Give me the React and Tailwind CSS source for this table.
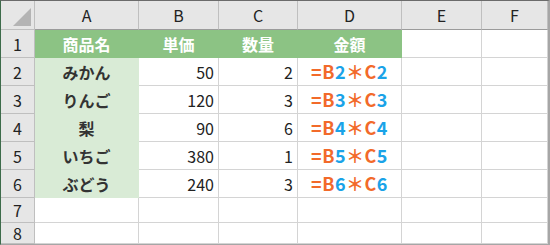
const cols = ["A", "B", "C", "D", "E", "F"];
const colW = ["w-[104px]", "w-[80px]", "w-[79px]", "w-[104px]", "w-[80px]", "flex-1"];

const items = [
  { name: "みかん", price: 50, qty: 2, row: 2 },
  { name: "りんご", price: 120, qty: 3, row: 3 },
  { name: "梨", price: 90, qty: 6, row: 4 },
  { name: "いちご", price: 380, qty: 1, row: 5 },
  { name: "ぶどう", price: 240, qty: 3, row: 6 },
];

const font = { fontFamily: '"Noto Sans CJK JP", "Noto Sans", sans-serif' };

function RowHead({ n, h }) {
  return (
    <div className={`flex w-[34px] shrink-0 items-center justify-center border-r border-b border-[#bfbfbf] bg-[#e6e6e6] text-[16px] leading-none text-[#222] ${h}`}>
      {n}
    </div>
  );
}

function Formula({ r }) {
  return (
    <span className="font-bold tracking-[0.5px]">
      <span className="text-[#f26a2a]">=B</span>
      <span className="text-[#1aa3e8]">{r}</span>
      <span className="text-[#f26a2a]">＊C</span>
      <span className="text-[#1aa3e8]">{r}</span>
    </span>
  );
}

export default function App() {
  const grid = "border-r border-b border-[#d4d4d4]";
  return (
    <div
      className="flex h-[245px] w-[550px] flex-col overflow-hidden border-t border-l border-r-2 border-b border-t-[#6b6b6b] border-l-[#3d6b4a] border-r-[#a6a6a6] border-b-[#a6a6a6] bg-white"
      style={font}
    >
      {/* column headers */}
      <div className="flex h-[29px] shrink-0">
        <div className="relative w-[34px] shrink-0 border-r border-b border-[#bfbfbf] bg-[#e6e6e6]">
          <svg className="absolute bottom-[3px] right-[3px]" width="18" height="18" viewBox="0 0 18 18">
            <polygon points="18,0 18,18 0,18" fill="#b4b4b4" />
          </svg>
        </div>
        {cols.map((c, i) => (
          <div
            key={c}
            className={`flex shrink-0 items-center justify-center border-r border-b border-r-[#bfbfbf] border-b-[#9b9b9b] bg-[#e6e6e6] text-[16px] text-[#222] ${colW[i]}`}
          >
            {c}
          </div>
        ))}
      </div>

      {/* row 1 */}
      <div className="flex h-[28px] shrink-0">
        <RowHead n={1} h="h-[28px]" />
        {["商品名", "単価", "数量", "金額"].map((t, i) => (
          <div
            key={t}
            className={`flex shrink-0 items-center justify-center border-r border-b border-[#8cc384] bg-[#8cc384] text-[16px] font-bold text-white ${colW[i]}`}
          >
            {t}
          </div>
        ))}
        <div className={`shrink-0 ${grid} ${colW[4]}`} />
        <div className={`${grid} flex-1`} />
      </div>

      {items.map((it) => (
        <div key={it.row} className="flex h-[28px] shrink-0">
          <RowHead n={it.row} h="h-[28px]" />
          <div className="flex w-[104px] shrink-0 items-center justify-center border-r border-b border-[#d9ebd6] bg-[#d9ebd6] text-[16px] font-bold text-[#333]">
            {it.name}
          </div>
          <div className={`flex w-[80px] shrink-0 items-center justify-end pr-[4px] text-[16px] text-[#222] ${grid}`}>
            {it.price}
          </div>
          <div className={`flex w-[79px] shrink-0 items-center justify-end pr-[4px] text-[16px] text-[#222] ${grid}`}>
            {it.qty}
          </div>
          <div className={`flex w-[104px] shrink-0 items-center justify-center text-[18px] ${grid}`}>
            <Formula r={it.row} />
          </div>
          <div className={`w-[80px] shrink-0 ${grid}`} />
          <div className={`flex-1 ${grid}`} />
        </div>
      ))}

      {[7, 8].map((n) => (
        <div key={n} className={`flex min-h-0 ${n === 7 ? "h-[25px] shrink-0" : "flex-1"}`}>
          <RowHead n={n} h="" />
          {colW.map((w, i) => (
            <div key={i} className={`shrink-0 ${grid} ${w}`} />
          ))}
        </div>
      ))}
    </div>
  );
}
